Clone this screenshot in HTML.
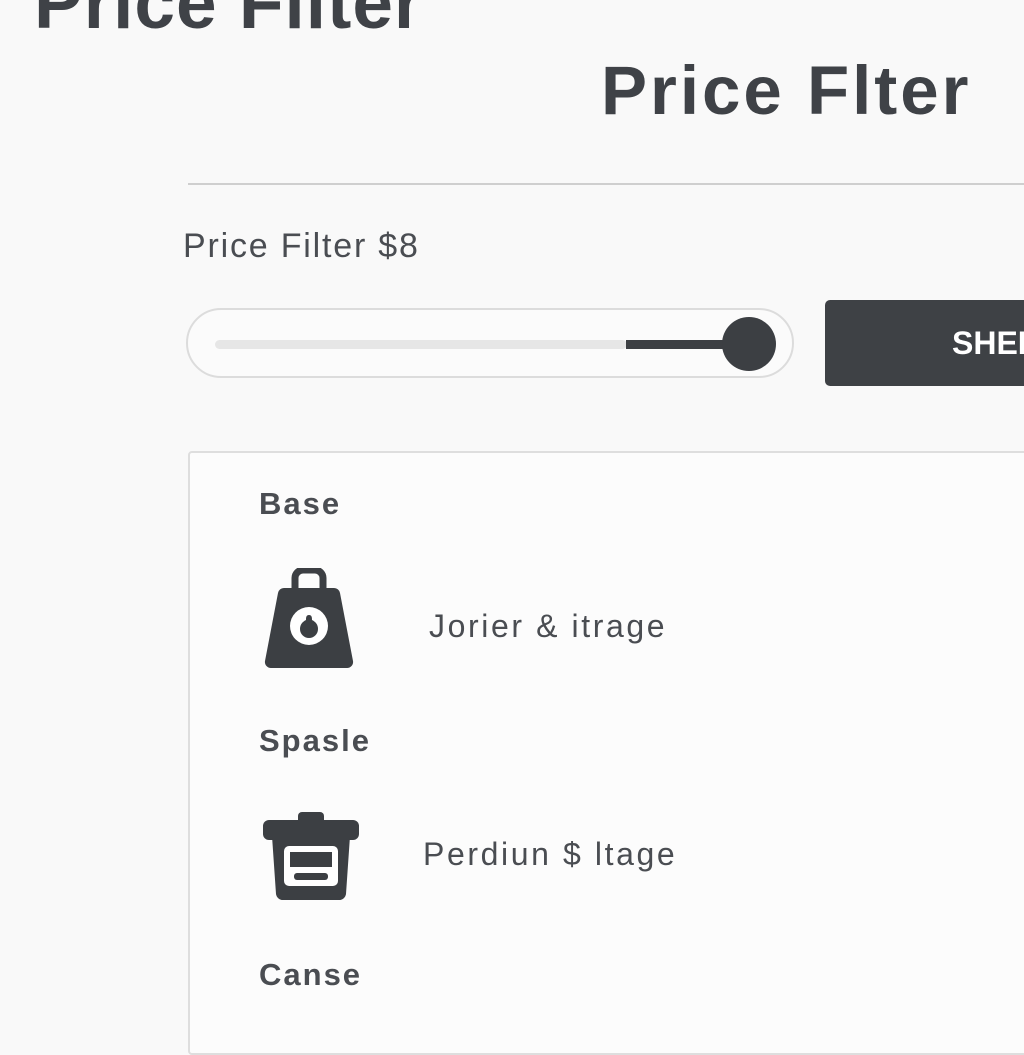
<!DOCTYPE html>
<html><head><style>
body{margin:0;width:1024px;height:1024px;background:#f9f9f9;overflow:hidden;position:relative;font-family:"Liberation Sans",sans-serif;color:#45484d}
.a{position:absolute;white-space:nowrap}
</style></head><body>
<div class="a" style="left:34px;top:-33px;font-size:73px;font-weight:bold;line-height:73px;color:#3f4247;letter-spacing:1px">Price Filter</div>
<div class="a" style="left:601px;top:56px;font-size:69px;font-weight:bold;line-height:69px;color:#3f4247;letter-spacing:3px">Price Flter</div>
<div class="a" style="left:188px;top:183px;width:836px;height:2px;background:#cfcfcf"></div>
<div class="a" style="left:183px;top:227px;font-size:34px;line-height:38px;letter-spacing:1.8px;color:#4a4d52">Price Filter $8</div>
<div class="a" style="left:186px;top:308px;width:604px;height:66px;border:2px solid #dcdcdc;border-radius:36px;background:#fbfbfb"></div>
<div class="a" style="left:215px;top:340px;width:412px;height:9px;border-radius:5px;background:#e6e6e6"></div>
<div class="a" style="left:626px;top:340px;width:100px;height:9px;background:#3c3f43"></div>
<div class="a" style="left:722px;top:317px;width:54px;height:54px;border-radius:50%;background:#3c3f43"></div>
<div class="a" style="left:825px;top:300px;width:220px;height:86px;border-radius:5px;background:#3e4145"></div>
<div class="a" style="left:952px;top:325px;font-size:32px;font-weight:bold;line-height:36px;color:#fff">SHELF</div>
<div class="a" style="left:188px;top:451px;width:860px;height:600px;border:2px solid #dedede;border-radius:4px;background:#fcfcfc"></div>
<div class="a" style="left:259px;top:486px;font-size:31px;font-weight:bold;line-height:36px;color:#4a4d52;letter-spacing:2px">Base</div>
<svg class="a" style="left:262px;top:568px" width="94" height="102" viewBox="0 0 94 102">
<path d="M33 22V10a8 8 0 0 1 8-8h12a8 8 0 0 1 8 8v12" fill="none" stroke="#3c3f43" stroke-width="7"/>
<path d="M22 20h50a6 6 0 0 1 6 5l13 68a6 6 0 0 1-6 7H9a6 6 0 0 1-6-7l13-68a6 6 0 0 1 6-5z" fill="#3c3f43"/>
<circle cx="47" cy="58" r="19" fill="#fff"/>
<path d="M47 47c-3 0-3 3-3 5-4 2-6 5-6 9a9 9 0 0 0 18 0c0-4-2-7-6-9 0-2 0-5-3-5z" fill="#3c3f43"/>
</svg>
<div class="a" style="left:429px;top:608px;font-size:32px;line-height:36px;color:#4a4d52;letter-spacing:2.6px">Jorier &amp; itrage</div>
<div class="a" style="left:259px;top:723px;font-size:31px;font-weight:bold;line-height:36px;color:#4a4d52;letter-spacing:2px">Spasle</div>
<svg class="a" style="left:262px;top:812px" width="98" height="90" viewBox="0 0 98 90">
<rect x="36" y="0" width="26" height="12" rx="4" fill="#3c3f43"/>
<rect x="1" y="8" width="96" height="20" rx="6" fill="#3c3f43"/>
<path d="M10 24h78l-4 58a7 7 0 0 1-7 6H21a7 7 0 0 1-7-6z" fill="#3c3f43"/>
<rect x="22" y="34" width="54" height="40" rx="5" fill="#fff"/>
<rect x="28" y="40" width="42" height="15" fill="#3c3f43"/>
<rect x="32" y="61" width="34" height="7" rx="3" fill="#3c3f43"/>
</svg>
<div class="a" style="left:423px;top:836px;font-size:32px;line-height:36px;color:#4a4d52;letter-spacing:2.6px">Perdiun $ ltage</div>
<div class="a" style="left:259px;top:957px;font-size:31px;font-weight:bold;line-height:36px;color:#4a4d52;letter-spacing:2px">Canse</div>
</body></html>
